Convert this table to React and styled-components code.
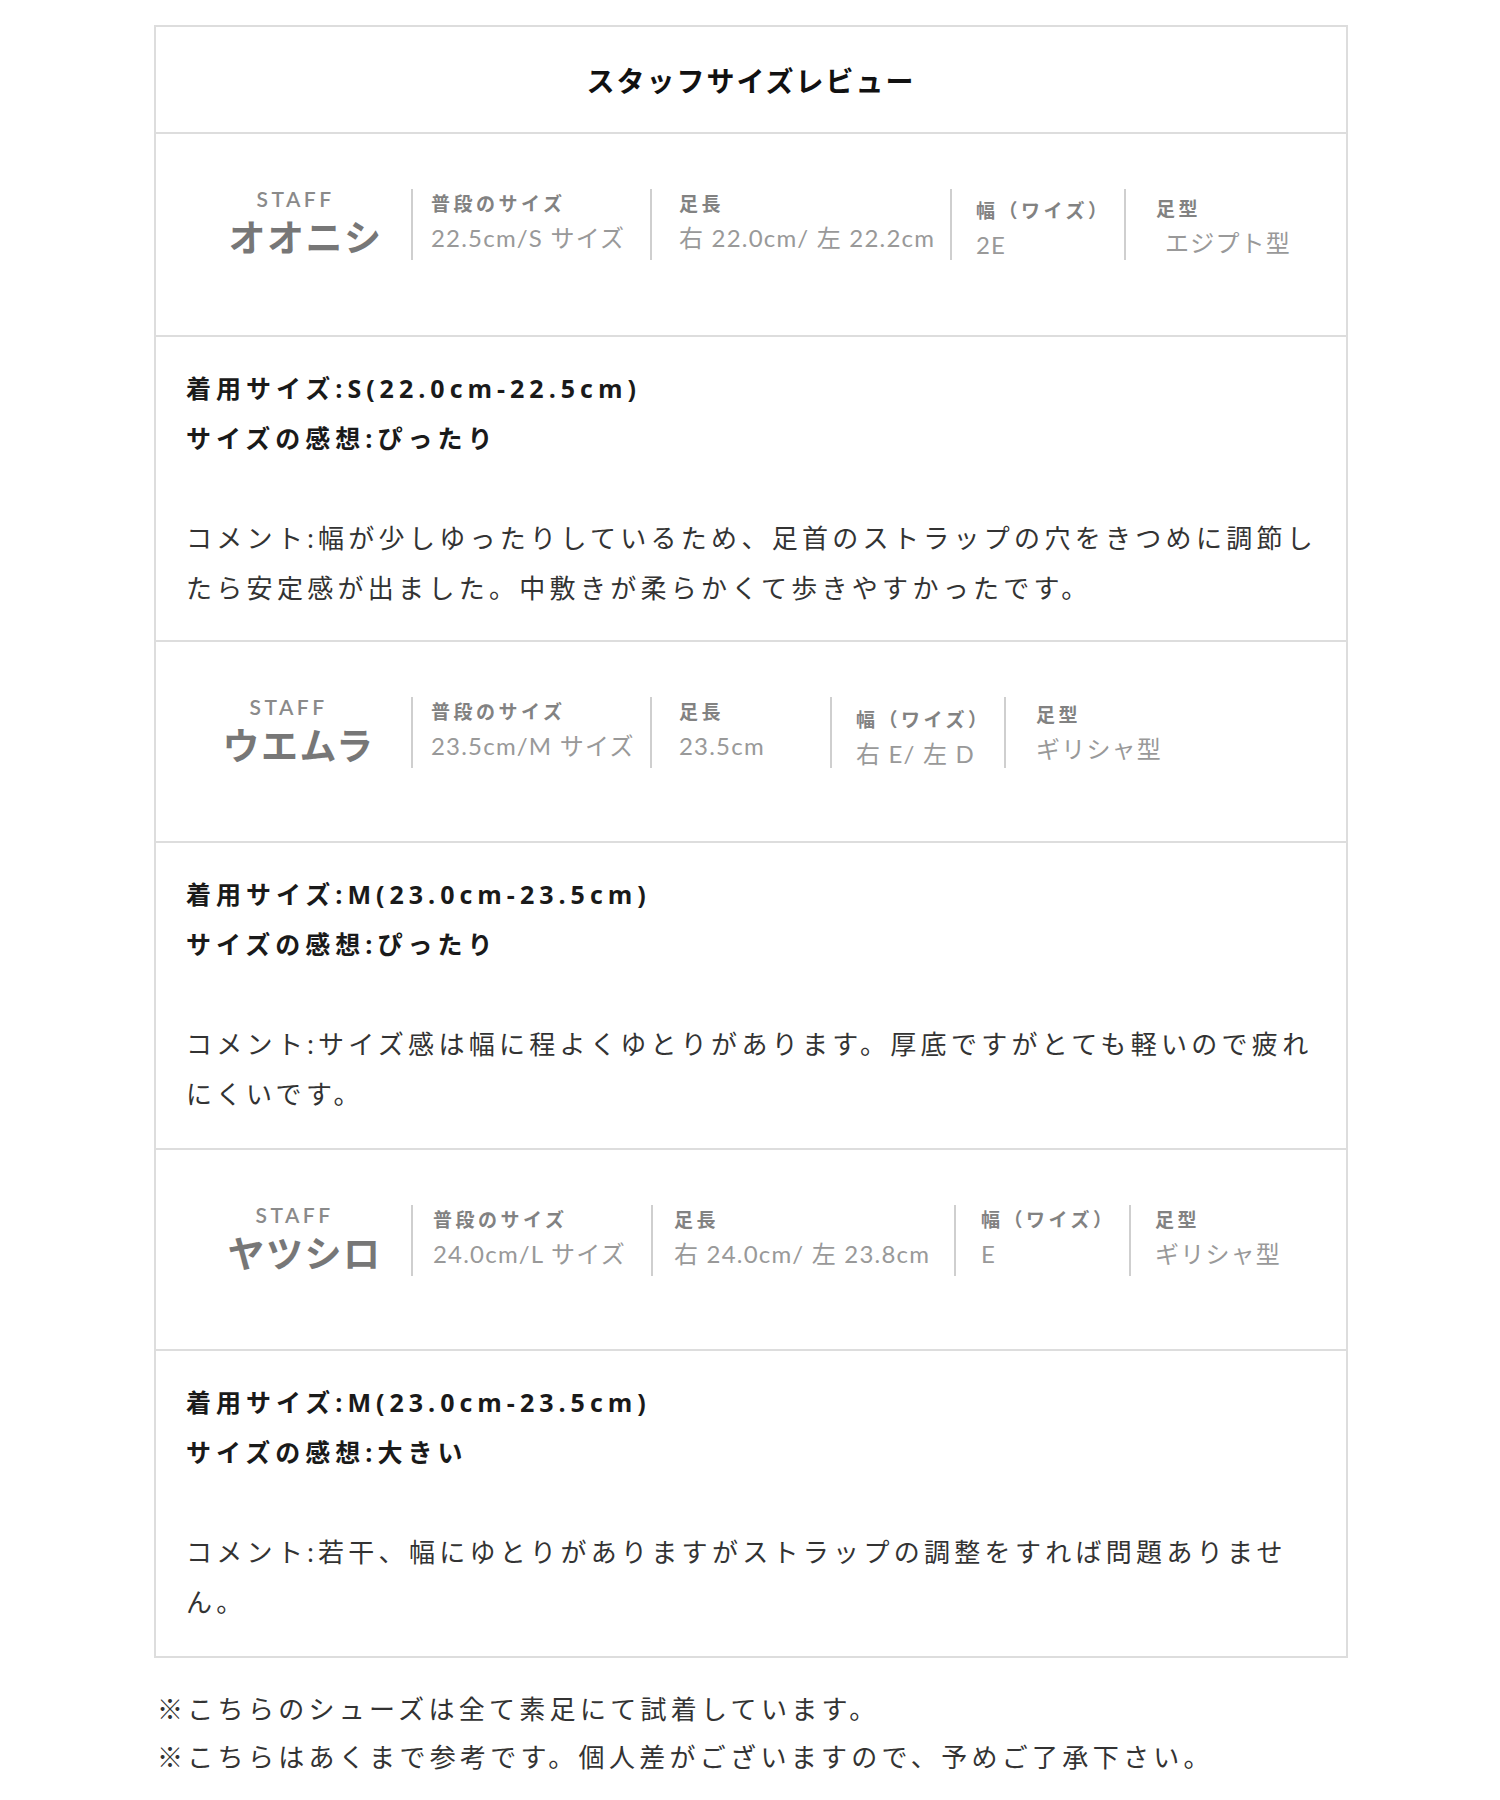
import React from 'react'
import styled, { createGlobalStyle } from 'styled-components'

const GlobalStyle = createGlobalStyle`
    body {
        margin:      0;
        background:  #ffffff;
        font-family: "Lato", "Noto Sans CJK JP", sans-serif;
    }
`

const Page = styled.div`
    padding: 25px 0 0 154px;
    width:   1194px;
`

const Card = styled.div`
    border: 2px solid #dddddd;
`

const Header = styled.div`
    height:          105px;
    display:         flex;
    align-items:     center;
    justify-content: center;
    font-size:       28px;
    font-weight:     700;
    letter-spacing:  2px;
    color:           #111111;
`

const StaffRow = styled.div`
    height:      ${p => p.$height}px;
    box-sizing:  border-box;
    border-top:  2px solid #dddddd;
    display:     flex;
    align-items: flex-start;
    padding-top: 55px;
`

const NameCol = styled.div`
    flex:           0 0 255px;
    box-sizing:     border-box;
    padding-left:   ${p => p.$pad}px;
    display:        flex;
    flex-direction: column;
    align-items:    center;
`

const StaffTag = styled.div`
    font-size:      21px;
    line-height:    20px;
    letter-spacing: 3.5px;
    font-weight:    600;
    color:          #8a8a8a;
    margin-right:   20px;
`

const StaffName = styled.div`
    margin-top:     7px;
    font-size:      37px;
    line-height:    44px;
    letter-spacing: 1.5px;
    font-weight:    700;
    color:          #777777;
`

const InfoCol = styled.div`
    flex:         ${p => (p.$width ? `0 0 ${p.$width}px` : '1')};
    box-sizing:   border-box;
    border-left:  2px solid #cfcfcf;
    height:       71px;
    padding-left: ${p => p.$pad}px;
    padding-top:  ${p => p.$drop || 0}px;
    white-space:  nowrap;
`

const InfoLabel = styled.div`
    font-size:      19px;
    line-height:    30px;
    letter-spacing: 3.5px;
    font-weight:    700;
    color:          #828282;
`

const InfoValue = styled.div`
    font-size:      24px;
    line-height:    38px;
    letter-spacing: 1.2px;
    color:          #999999;
    padding-left:   ${p => p.$indent || 0}px;
`

const Review = styled.div`
    border-top:     2px solid #dddddd;
    padding:        26px 20px ${p => p.$bottom}px 30px;
    font-size:      26px;
    line-height:    50px;
    letter-spacing: 4.3px;
    color:          #333333;
`

const Strong = styled.div`
    font-family:    "Open Sans", "Noto Sans CJK JP", sans-serif;
    font-size:      25px;
    font-weight:    700;
    color:          #1a1a1a;
    letter-spacing: 5px;
`

const Comment = styled.p`
    margin:     50px 0 0;
    line-break: strict;
`

const Notes = styled.div`
    margin-top:     27px;
    padding-left:   3px;
    font-size:      26px;
    line-height:    48px;
    letter-spacing: 4.3px;
    color:          #333333;
`

const staff = [
    {
        name:    'オオニシ',
        height:  203,
        namePad: 44,
        bottom:  27,
        cols: [
            { label: '普段のサイズ', value: '22.5cm/S サイズ', width: 239, pad: 18 },
            { label: '足長', value: '右 22.0cm/ 左 22.2cm', width: 300, pad: 27 },
            { label: '幅（ワイズ）', value: '2E', width: 174, pad: 24, drop: 7 },
            { label: '足型', value: 'エジプト型', pad: 30, drop: 5, indent: 9 },
        ],
        size:    '着用サイズ:S(22.0cm-22.5cm)',
        feel:    'サイズの感想:ぴったり',
        comment: 'コメント:幅が少しゆったりしているため、足首のストラップの穴をきつめに調節したら安定感が出ました。中敷きが柔らかくて歩きやすかったです。',
    },
    {
        name:    'ウエムラ',
        height:  201,
        namePad: 30,
        bottom:  29,
        cols: [
            { label: '普段のサイズ', value: '23.5cm/M サイズ', width: 239, pad: 18 },
            { label: '足長', value: '23.5cm', width: 180, pad: 27 },
            { label: '幅（ワイズ）', value: '右 E/ 左 D', width: 174, pad: 24, drop: 8 },
            { label: '足型', value: 'ギリシャ型', pad: 30, drop: 3 },
        ],
        size:    '着用サイズ:M(23.0cm-23.5cm)',
        feel:    'サイズの感想:ぴったり',
        comment: 'コメント:サイズ感は幅に程よくゆとりがあります。厚底ですがとても軽いので疲れにくいです。',
    },
    {
        name:    'ヤツシロ',
        height:  201,
        namePad: 42,
        bottom:  29,
        cols: [
            { label: '普段のサイズ', value: '24.0cm/L サイズ', width: 240, pad: 20 },
            { label: '足長', value: '右 24.0cm/ 左 23.8cm', width: 303, pad: 21 },
            { label: '幅（ワイズ）', value: 'E', width: 175, pad: 25 },
            { label: '足型', value: 'ギリシャ型', pad: 24 },
        ],
        size:    '着用サイズ:M(23.0cm-23.5cm)',
        feel:    'サイズの感想:大きい',
        comment: 'コメント:若干、幅にゆとりがありますがストラップの調整をすれば問題ありません。',
    },
]

const App = () => (
    <Page>
        <GlobalStyle />
        <Card>
            <Header>スタッフサイズレビュー</Header>
            {
                staff.map(s => (
                    <React.Fragment key={s.name}>
                        <StaffRow $height={s.height}>
                            <NameCol $pad={s.namePad}>
                                <StaffTag>STAFF</StaffTag>
                                <StaffName>{s.name}</StaffName>
                            </NameCol>
                            {
                                s.cols.map(c => (
                                    <InfoCol key={c.label} $width={c.width} $pad={c.pad} $drop={c.drop}>
                                        <InfoLabel>{c.label}</InfoLabel>
                                        <InfoValue $indent={c.indent}>{c.value}</InfoValue>
                                    </InfoCol>
                                ))
                            }
                        </StaffRow>
                        <Review $bottom={s.bottom}>
                            <Strong>{s.size}</Strong>
                            <Strong>{s.feel}</Strong>
                            <Comment>{s.comment}</Comment>
                        </Review>
                    </React.Fragment>
                ))
            }
        </Card>
        <Notes>
            <div>※こちらのシューズは全て素足にて試着しています。</div>
            <div>※こちらはあくまで参考です。個人差がございますので、予めご了承下さい。</div>
        </Notes>
    </Page>
)

export default App
